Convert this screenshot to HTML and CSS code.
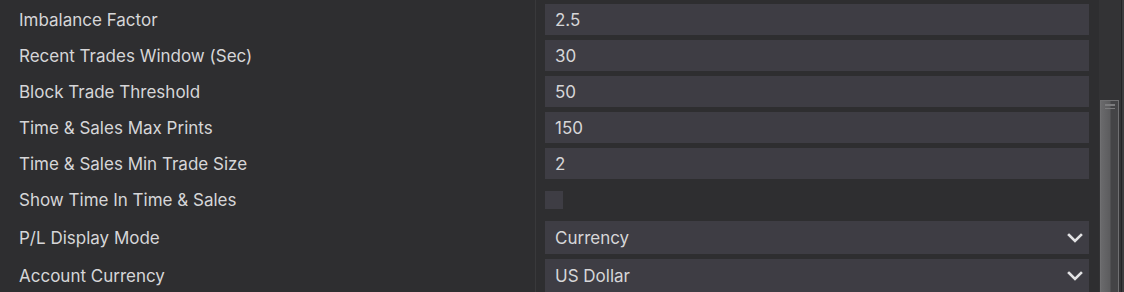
FILE: index.html
```html
<!DOCTYPE html>
<html>
<head>
<meta charset="utf-8">
<link rel="stylesheet" href="styles.css">
</head>
<body>
<div class="page">
  <div class="form">
    <div class="row"><div class="label">Imbalance Factor</div><div class="cell"><div class="input">2.5</div></div></div>
    <div class="row"><div class="label">Recent Trades Window (Sec)</div><div class="cell"><div class="input">30</div></div></div>
    <div class="row"><div class="label">Block Trade Threshold</div><div class="cell"><div class="input">50</div></div></div>
    <div class="row"><div class="label">Time &amp; Sales Max Prints</div><div class="cell"><div class="input">150</div></div></div>
    <div class="row"><div class="label">Time &amp; Sales Min Trade Size</div><div class="cell"><div class="input">2</div></div></div>
    <div class="row row-check"><div class="label">Show Time In Time &amp; Sales</div><div class="cell"><div class="checkbox"></div></div></div>
    <div class="row"><div class="label">P/L Display Mode</div><div class="cell"><div class="select"><span>Currency</span><svg class="chev" width="16" height="10" viewBox="0 0 16 10"><polyline points="2,2 8,8 14,2" fill="none" stroke="#e2e2e4" stroke-width="2.6" stroke-linecap="square"/></svg></div></div></div>
    <div class="row"><div class="label">Account Currency</div><div class="cell"><div class="select"><span>US Dollar</span><svg class="chev" width="16" height="10" viewBox="0 0 16 10"><polyline points="2,2 8,8 14,2" fill="none" stroke="#e2e2e4" stroke-width="2.6" stroke-linecap="square"/></svg></div></div></div>
  </div>
  <div class="scrollbar">
    <div class="track">
      <div class="thumb"><div class="grip"></div></div>
    </div>
    <div class="edge"></div>
  </div>
</div>
</body>
</html>
```
FILE: styles.css
```css
html, body {
  margin: 0;
  padding: 0;
  background: #2e2e30;
  overflow: hidden;
}
body {
  font-family: Inter, "Noto Sans", sans-serif;
  color: #d6d6d8;
  font-size: 17px;
}
.page {
  display: flex;
  height: 292px;
}
.form {
  width: 1099px;
  display: flex;
  flex-direction: column;
  gap: 5px;
  padding-top: 4px;
  background-image: linear-gradient(to right, transparent 535px, #39393b 535px, #39393b 536px, transparent 536px);
}
.row {
  display: grid;
  grid-template-columns: 536px 1fr;
  align-items: center;
}
.row-check {
  margin: 7px 0;
}
.label {
  padding-left: 19px;
  white-space: nowrap;
  line-height: 18px;
}
.cell {
  padding-left: 9px;
  padding-right: 10px;
}
.input {
  height: 31px;
  background: #3e3d44;
  display: flex;
  align-items: center;
  padding-left: 10px;
}
.checkbox {
  width: 18px;
  height: 18px;
  background: #3e3d44;
}
.select {
  height: 33px;
  background: #3e3d44;
  display: flex;
  align-items: center;
  justify-content: space-between;
  padding-left: 10px;
  padding-right: 6px;
}
.chev {
  display: block;
}
.scrollbar {
  width: 25px;
  display: flex;
}
.track {
  width: 22px;
  background: #333335;
  padding-top: 100px;
  box-sizing: border-box;
}
.thumb {
  margin-left: 1px;
  width: 19px;
  height: 200px;
  box-sizing: border-box;
  border: 1px solid #707072;
  background: linear-gradient(to right, #6a6a6c 0, #5c5c5e 9px, #444446 10px, #444446 100%);
  padding: 3px 3px 0 3px;
}
.grip {
  height: 5px;
  border-top: 2px solid #7c7c7e;
  border-bottom: 1px solid #7c7c7e;
  box-sizing: border-box;
  margin-left: 1px;
}
.edge {
  width: 3px;
  background: linear-gradient(to right, #242426 0, #242426 1px, #3c3c3e 1px);
}
```
